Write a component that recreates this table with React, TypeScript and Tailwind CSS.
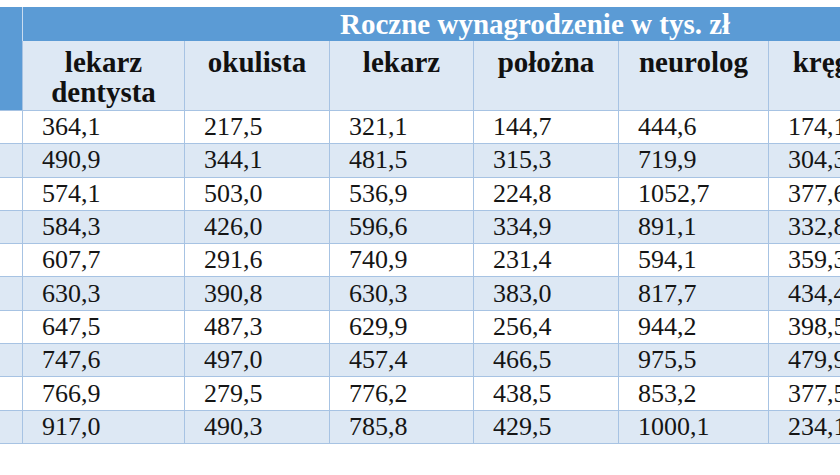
const columns = ["lekarz dentysta", "okulista", "lekarz", "położna", "neurolog", "kręgarz"];

const rows: string[][] = [
  ["364,1", "217,5", "321,1", "144,7", "444,6", "174,1"],
  ["490,9", "344,1", "481,5", "315,3", "719,9", "304,3"],
  ["574,1", "503,0", "536,9", "224,8", "1052,7", "377,6"],
  ["584,3", "426,0", "596,6", "334,9", "891,1", "332,8"],
  ["607,7", "291,6", "740,9", "231,4", "594,1", "359,3"],
  ["630,3", "390,8", "630,3", "383,0", "817,7", "434,4"],
  ["647,5", "487,3", "629,9", "256,4", "944,2", "398,5"],
  ["747,6", "497,0", "457,4", "466,5", "975,5", "479,9"],
  ["766,9", "279,5", "776,2", "438,5", "853,2", "377,5"],
  ["917,0", "490,3", "785,8", "429,5", "1000,1", "234,1"],
];

const gridCols = "grid grid-cols-[22px_162px_145px_144px_145px_150px_145px]";

export default function App() {
  return (
    <div className="w-[840px] h-[475px] overflow-hidden bg-white pt-[7px] font-['Liberation_Serif',serif]">
      <div className="w-[913px]">
        {/* header */}
        <div className={`${gridCols} grid-rows-[34px_70px]`}>
          <div className="row-span-2 bg-[#5b9bd5] border-b border-[#a7c3e3]" />
          <div className="col-span-6 bg-[#5b9bd5] border-l border-[#c9dcf0] pl-[317px] text-[29px] leading-[34px] font-bold text-white whitespace-nowrap">
            Roczne wynagrodzenie w tys. zł
          </div>
          {columns.map((c) => (
            <div
              key={c}
              className="bg-[#dde8f4] border-l border-b border-[#a7c3e3] pt-[6px] text-center text-[29px] leading-[30px] font-bold text-[#111]"
            >
              {c.split(" ").map((w) => (
                <div key={w}>{w}</div>
              ))}
            </div>
          ))}
        </div>

        {/* data */}
        <div className={`${gridCols} grid-rows-[repeat(10,minmax(0,1fr))] h-[333px]`}>
          {rows.map((r, i) => {
            const bg = i % 2 === 0 ? "bg-white" : "bg-[#dde8f4]";
            return [
              <div key={`l${i}`} className={`${bg} border-b border-[#a7c3e3]`} />,
              ...r.map((v, j) => (
                <div
                  key={`${i}-${j}`}
                  className={`${bg} border-l border-b border-[#a7c3e3] pl-[19px] flex items-center text-[26px] leading-none text-[#151515] whitespace-nowrap`}
                >
                  {v}
                </div>
              )),
            ];
          })}
        </div>
      </div>
    </div>
  );
}
